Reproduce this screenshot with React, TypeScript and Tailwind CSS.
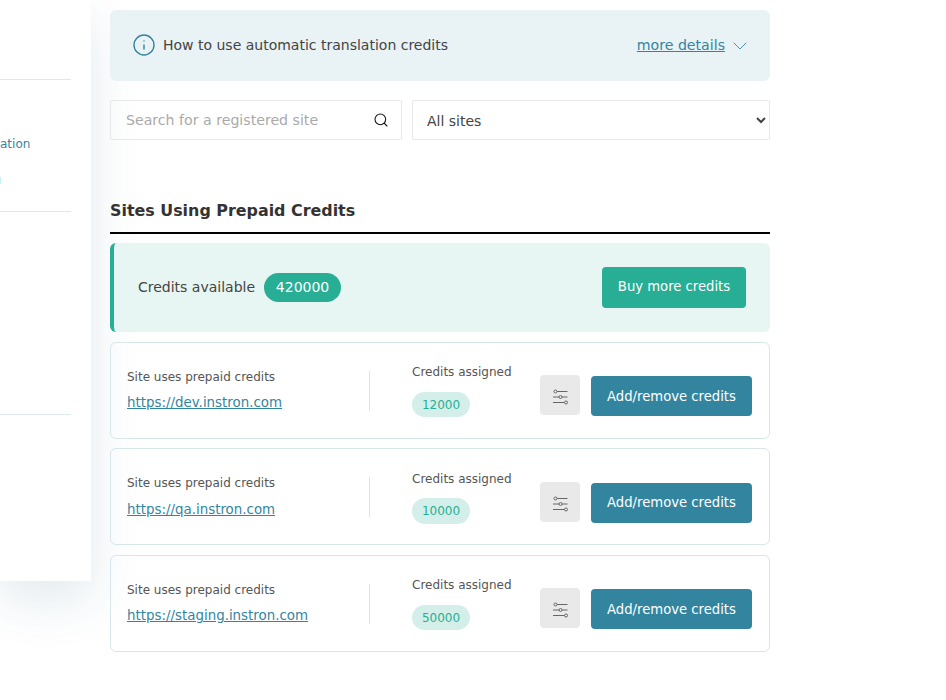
import { ChevronDown, Info, Search } from "lucide-react";

const sites = [
  { url: "https://dev.instron.com", credits: 12000 },
  { url: "https://qa.instron.com", credits: 10000 },
  { url: "https://staging.instron.com", credits: 50000 },
];

function SlidersIcon() {
  return (
    <svg width="18" height="18" viewBox="0 0 18 18" fill="none" stroke="#666" strokeWidth="1">
      <path d="M6 3.5h10.5M2 9h6M11 9h5.5M2 14.5h11.5" />
      <circle cx="4.5" cy="3.5" r="1.5" />
      <circle cx="9.5" cy="9" r="1.5" />
      <circle cx="15" cy="14.5" r="1.5" />
    </svg>
  );
}

export default function App() {
  return (
    <div className="flex h-[700px] w-[946px] items-start gap-[19px] overflow-hidden bg-white font-['DejaVu_Sans',sans-serif]">
      {/* sidebar, cut off by the left edge */}
      <aside className="h-[581px] w-[91px] shrink-0 bg-white shadow-[0_20px_50px_rgba(40,90,120,0.13)]">
        <div className="mr-5 h-[80px] border-b border-[#dce9ee]" />
        <div className="mr-5 flex h-[132px] flex-col border-b border-[#dce9ee] pt-[57px] text-xs text-[#33859f]">
          <span className="leading-[15px]">ation</span>
          <span className="mt-[25px] h-[7px] w-px bg-[#c5f1f7]" />
        </div>
        <div className="mr-5 h-[203px] border-b border-[#dce9ee]" />
      </aside>

      <main className="w-[660px] shrink-0 pt-[10px]">
        {/* help banner */}
        <div className="flex h-[71px] items-center justify-between rounded-md bg-[#e9f2f5] pr-6 pl-[22px] text-sm text-[#444]">
          <div className="flex -translate-y-px items-center gap-[7px]">
            <Info size={24} strokeWidth={1.4} className="text-[#33859f]" />
            <span>How to use automatic translation credits</span>
          </div>
          <div className="-mr-[6px] flex items-center gap-[3px] text-[#33859f]">
            <a className="text-[14.15px] underline" href="#">more details</a>
            <ChevronDown size={24} strokeWidth={1} className="text-[#4c98b0]" />
          </div>
        </div>

        {/* filters */}
        <div className="mt-[19px] flex gap-[10px]">
          <div className="flex h-10 w-[292px] items-center justify-between rounded-[2px] border border-[#e8e8e8] pr-[12px] pl-[15px]">
            <span className="translate-y-px text-[14.15px] text-[#aaa]">Search for a registered site</span>
            <Search size={16} strokeWidth={1.6} className="text-[#111]" />
          </div>
          <select className="h-10 w-[358px] rounded-[2px] border border-[#e8e8e8] bg-white pt-[2px] pl-[10px] text-sm text-[#444]">
            <option>All sites</option>
          </select>
        </div>

        <h2 className="mt-[61px] border-b-2 border-black pb-[12px] text-[15.9px] leading-[19px] font-bold text-[#333]">
          Sites Using Prepaid Credits
        </h2>

        {/* balance */}
        <div className="mt-[9px] flex h-[88.8px] items-center justify-between rounded-md border-l-4 border-[#27ae94] bg-[#e7f6f2] pr-6 pl-6 text-sm text-[#444]">
          <div className="flex items-center gap-[9px]">
            <span>Credits available</span>
            <span className="flex h-[29px] w-[77px] items-center justify-center rounded-full bg-[#27ae94] text-white">420000</span>
          </div>
          <button className="h-[41px] w-[144px] rounded bg-[#27ae94] text-[13.2px] font-medium text-white">Buy more credits</button>
        </div>

        {/* sites */}
        <div className="mt-[10px] flex flex-col gap-[9.5px]">
          {sites.map((site) => (
            <div key={site.url} className="flex h-[97px] items-center rounded-md border border-[#d7e6eb] pr-[17px] pl-4">
              <div className="w-[242px] text-xs text-[#555]">
                <p className="leading-[15px]">Site uses prepaid credits</p>
                <a className="mt-[10.5px] block text-[13.4px] leading-4 text-[#33859f] underline" href="#">{site.url}</a>
              </div>
              <div className="mt-px h-10 w-px bg-[#d7e6eb]" />
              <div className="ml-[42px] w-[128px] translate-y-px text-xs text-[#555]">
                <p className="leading-[15px]">Credits assigned</p>
                <span className="mt-[11.5px] flex h-[25.5px] w-[58px] items-center justify-center rounded-full bg-[#d4efe9] text-[#27ae94]">{site.credits}</span>
              </div>
              <button className="mt-[10px] flex h-10 w-10 items-center justify-center rounded bg-[#e9e9e9] pt-1">
                <SlidersIcon />
              </button>
              <button className="mt-[12px] ml-[11px] h-10 w-[161px] rounded bg-[#33859f] pt-px text-[13.2px] font-medium text-white">Add/remove credits</button>
            </div>
          ))}
        </div>
      </main>
    </div>
  );
}
